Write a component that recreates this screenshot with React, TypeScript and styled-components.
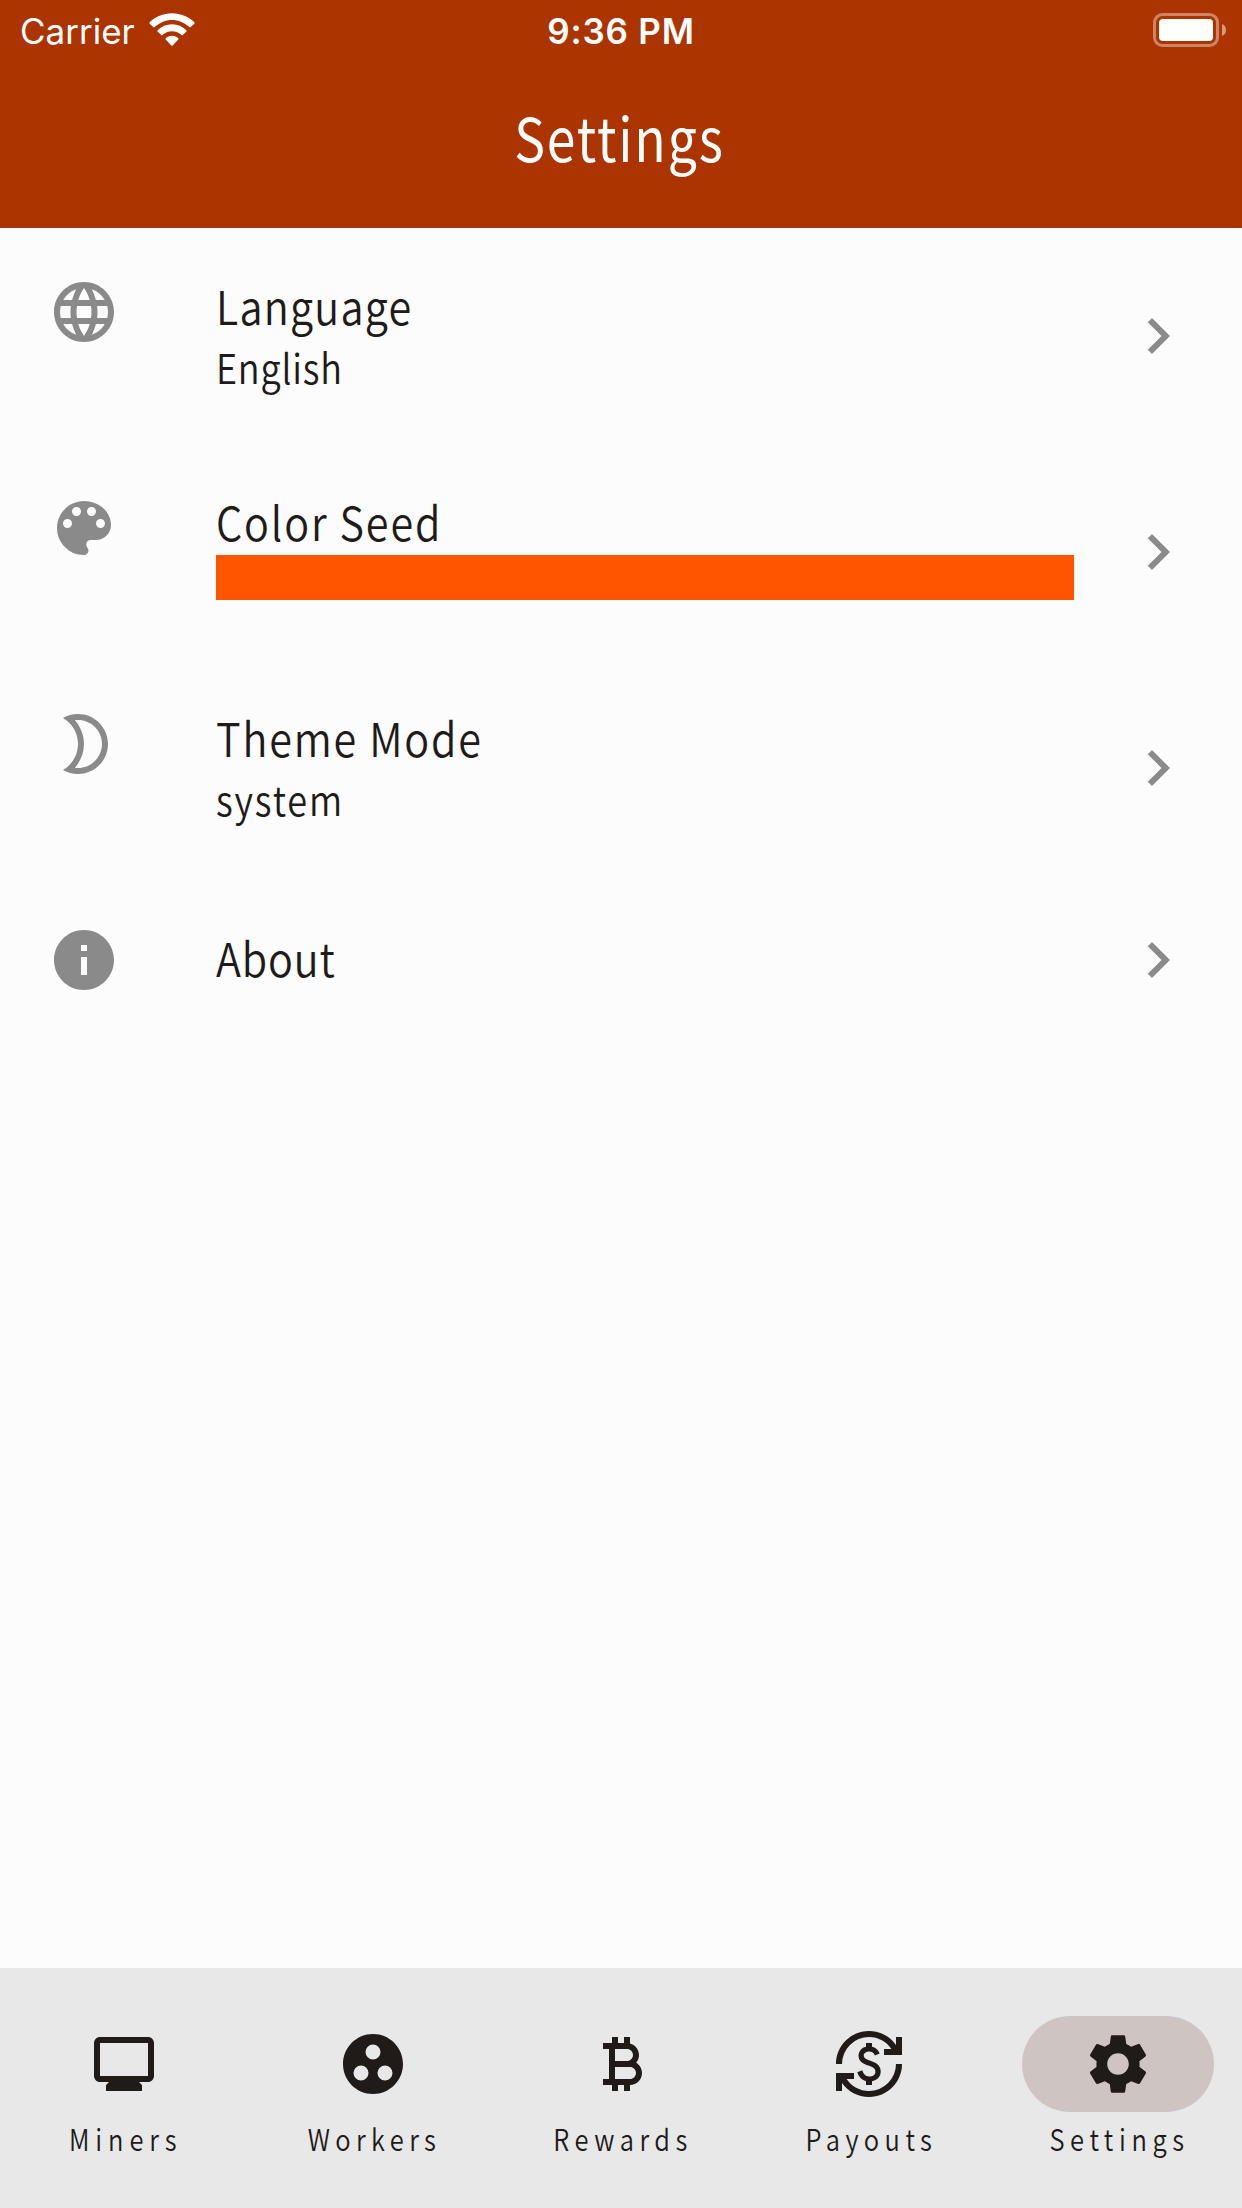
import React, { ReactNode } from "react";
import styled, { createGlobalStyle } from "styled-components";
import { MdLanguage, MdInfo, MdChevronRight, MdGroupWork, MdCurrencyBitcoin, MdCurrencyExchange, MdSettings } from "react-icons/md";

const GlobalStyle = createGlobalStyle`
  * { box-sizing: border-box; }
  body { margin: 0; background: #fcfcfc; }
`;

const Screen = styled.div`
  display: flex;
  flex-direction: column;
  width: 1242px;
  height: 2208px;
  background: #fcfcfc;
  color: #201a18;
  font-family: "Noto Sans CJK SC", "Open Sans", sans-serif;
  font-weight: 350;
`;

const Header = styled.header`
  display: flex;
  flex-direction: column;
  height: 228px;
  background: #ac3400;
  color: #ffffff;
`;

const StatusBar = styled.div`
  display: grid;
  grid-template-columns: 1fr auto 1fr;
  align-items: center;
  height: 62px;
  padding: 0 15px;
  font-family: Inter, "Liberation Sans", sans-serif;
  font-size: 35px;
  font-weight: 400;
  line-height: 62px;
`;

const CarrierGroup = styled.div`
  display: flex;
  align-items: center;
  gap: 14px;
  padding-left: 5px;
`;

const WifiIcon = styled.svg`
  margin-top: -3px;
`;

const Clock = styled.div`
  font-weight: 600;
  letter-spacing: 0.8px;
`;

const BatteryIcon = styled.svg`
  justify-self: end;
`;

/* Narrowed lettering shared by titles, rows and tab labels. */
const Narrow = styled.span<{ $scale: number; $tracking: number; $origin: "left" | "center" }>`
  display: inline-block;
  white-space: nowrap;
  letter-spacing: ${(p) => p.$tracking}px;
  margin-right: ${(p) => -p.$tracking}px;
  transform: scaleX(${(p) => p.$scale});
  transform-origin: ${(p) => p.$origin} center;
`;

const Title = styled.h1`
  margin: 0;
  padding: 29px 5px 0 0;
  font-size: 60px;
  font-weight: 400;
  line-height: 90px;
  text-align: center;
`;

const SettingsList = styled.main`
  flex: 1;
`;

const Row = styled.div<{ $short?: boolean }>`
  display: grid;
  grid-template-columns: 72px 906px 72px;
  column-gap: 48px;
  align-items: ${(p) => (p.$short ? "center" : "start")};
  height: ${(p) => (p.$short ? 168 : 216)}px;
  padding: ${(p) => (p.$short ? "0 48px" : "48px 48px 0")};
  color: #8a8a8a;

  & > svg:last-child {
    margin-top: ${(p) => (p.$short ? 0 : 24)}px;
  }
`;

const RowBody = styled.div<{ $short?: boolean }>`
  display: flex;
  flex-direction: column;
  margin-top: ${(p) => (p.$short ? 0 : -2)}px;
  padding: 0 0 ${(p) => (p.$short ? 6 : 0)}px 48px;
  color: #201a18;
`;

const RowTitle = styled.div`
  font-size: 47px;
  line-height: 62px;
`;

const RowValue = styled.div`
  font-size: 41px;
  line-height: 60px;
`;

const Swatch = styled.div`
  height: 45px;
  margin-top: 3px;
  background: #ff5500;
`;

const NavBar = styled.nav`
  display: grid;
  grid-template-columns: repeat(5, 1fr);
  height: 240px;
  background: #e8e8e8;
`;

const NavItem = styled.div`
  display: flex;
  flex-direction: column;
  align-items: center;
  padding-top: 48px;
`;

const Indicator = styled.div<{ $active?: boolean }>`
  display: flex;
  align-items: center;
  justify-content: center;
  width: 192px;
  height: 96px;
  border-radius: 48px;
  background: ${(p) => (p.$active ? "#cec5c2" : "transparent")};
`;

const NavLabel = styled.div`
  margin-top: 6px;
  padding-right: 3px;
  font-size: 30px;
  line-height: 40px;
`;

const Palette = () => (
  <svg width="72" height="72" viewBox="0 0 24 24" fill="currentColor">
    <path d="M12 3c-4.97 0-9 4.03-9 9s4.03 9 9 9c.83 0 1.5-.67 1.5-1.5 0-.39-.15-.74-.39-1.01-.23-.26-.38-.61-.38-.99 0-.83.67-1.5 1.5-1.5H16c2.76 0 5-2.24 5-5 0-4.42-4.03-8-9-8zm-5.5 9c-.83 0-1.5-.67-1.5-1.5S5.67 9 6.5 9 8 9.67 8 10.5 7.33 12 6.5 12zm3-4C8.67 8 8 7.33 8 6.5S8.67 5 9.5 5s1.5.67 1.5 1.5S10.33 8 9.5 8zm5 0c-.83 0-1.5-.67-1.5-1.5S13.67 5 14.5 5s1.5.67 1.5 1.5S15.33 8 14.5 8zm3 4c-.83 0-1.5-.67-1.5-1.5S16.67 9 17.5 9s1.5.67 1.5 1.5-.67 1.5-1.5 1.5z" />
  </svg>
);

const Moon = () => (
  <svg width="72" height="72" viewBox="-0.5 0 24 24" fill="currentColor">
    <path d="M9.5 4c4.41 0 8 3.59 8 8s-3.59 8-8 8c-.34 0-.68-.02-1.01-.07C10.4 17.66 11.5 14.9 11.5 12s-1.1-5.66-3.01-7.93C8.82 4.02 9.16 4 9.5 4m0-2c-1.82 0-3.53.5-5 1.35 2.99 1.73 5 4.95 5 8.65s-2.01 6.92-5 8.65c1.47.85 3.18 1.35 5 1.35 5.52 0 10-4.48 10-10S15.02 2 9.5 2z" />
  </svg>
);

const Monitor = () => (
  <svg width="72" height="72" viewBox="0 0 24 24" fill="currentColor">
    <path d="M20 3H4c-1.1 0-2 .9-2 2v11c0 1.1.9 2 2 2h3l-1 1v2h12v-2l-1-1h3c1.1 0 2-.9 2-2V5c0-1.1-.9-2-2-2zm0 13H4V5h16v11z" />
  </svg>
);

const Wifi = () => (
  <WifiIcon width="46" height="34" viewBox="0 0 46 34" fill="#fff">
    <path d="M23 0.3c8.8 0 16.8 3.5 22.3 9 0.4 0.4 0.4 1 0 1.4l-3.6 3.4c-0.4 0.4-1 0.4-1.4 0C35.6 9.7 29.6 7 23 7S10.4 9.7 5.7 14.1c-0.4 0.4-1 0.4-1.4 0L0.7 10.7c-0.4-0.4-0.4-1 0-1.4C6.2 3.8 14.2 0.3 23 0.3z" />
    <path d="M23 11.3c5.6 0 10.6 2.2 14.4 5.9 0.4 0.4 0.4 1 0 1.4l-3.5 3.4c-0.4 0.4-1 0.4-1.4 0-2.5-2.4-5.8-3.8-9.5-3.8s-7 1.4-9.5 3.8c-0.4 0.4-1 0.4-1.4 0l-3.5-3.4c-0.4-0.4-0.4-1 0-1.4C12.4 13.5 17.4 11.3 23 11.3z" />
    <path d="M23 22.7c2.5 0 4.7 0.9 6.3 2.5 0.4 0.4 0.4 0.9 0 1.3l-5.6 5.9c-0.4 0.4-1 0.4-1.4 0l-5.6-5.9c-0.4-0.4-0.4-0.9 0-1.3 1.6-1.6 3.8-2.5 6.3-2.5z" />
  </WifiIcon>
);

type RowProps = { icon: ReactNode; title: string; tracking: number; short?: boolean; children?: ReactNode };

const ListRow = ({ icon, title, tracking, short, children }: RowProps) => (
  <Row $short={short}>
    {icon}
    <RowBody $short={short}>
      <RowTitle>
        <Narrow $scale={0.88} $tracking={tracking} $origin="left">{title}</Narrow>
      </RowTitle>
      {children}
    </RowBody>
    <MdChevronRight size={72} />
  </Row>
);

const tabs = [
  { label: "Miners", tracking: 6.9, icon: <Monitor /> },
  { label: "Workers", tracking: 6.3, icon: <MdGroupWork size={72} /> },
  { label: "Rewards", tracking: 6.5, icon: <MdCurrencyBitcoin size={72} /> },
  { label: "Payouts", tracking: 6.4, icon: <MdCurrencyExchange size={72} /> },
  { label: "Settings", tracking: 6.6, icon: <MdSettings size={72} />, active: true },
];

export default function App() {
  return (
    <Screen>
      <GlobalStyle />
      <Header>
        <StatusBar>
          <CarrierGroup>
            Carrier
            <Wifi />
          </CarrierGroup>
          <Clock>9:36 PM</Clock>
          <BatteryIcon width="74" height="36" viewBox="0 0 74 36">
            <rect x="1.5" y="1.5" width="63" height="31" rx="8" fill="none" stroke="#fff" strokeOpacity="0.4" strokeWidth="3" />
            <rect x="6" y="6" width="54" height="22" rx="4" fill="#fff" />
            <path d="M69 11a6.5 6.5 0 0 1 0 12z" fill="#fff" fillOpacity="0.5" />
          </BatteryIcon>
        </StatusBar>
        <Title>
          <Narrow $scale={0.86} $tracking={2.2} $origin="center">Settings</Narrow>
        </Title>
      </Header>
      <SettingsList>
        <ListRow icon={<MdLanguage size={72} />} title="Language" tracking={1.4}>
          <RowValue>
            <Narrow $scale={0.88} $tracking={0.9} $origin="left">English</Narrow>
          </RowValue>
        </ListRow>
        <ListRow icon={<Palette />} title="Color Seed" tracking={2.1}>
          <Swatch />
        </ListRow>
        <ListRow icon={<Moon />} title="Theme Mode" tracking={2.1}>
          <RowValue>
            <Narrow $scale={0.88} $tracking={2.1} $origin="left">system</Narrow>
          </RowValue>
        </ListRow>
        <ListRow icon={<MdInfo size={72} />} title="About" tracking={1} short />
      </SettingsList>
      <NavBar>
        {tabs.map((t) => (
          <NavItem key={t.label}>
            <Indicator $active={t.active}>{t.icon}</Indicator>
            <NavLabel>
              <Narrow $scale={0.85} $tracking={t.tracking} $origin="center">{t.label}</Narrow>
            </NavLabel>
          </NavItem>
        ))}
      </NavBar>
    </Screen>
  );
}
